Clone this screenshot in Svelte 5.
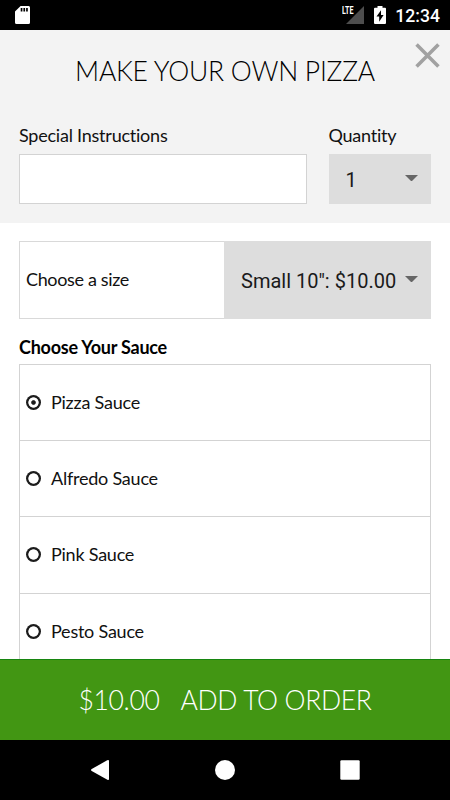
<script lang="ts">
	const sauces = ['Pizza Sauce', 'Alfredo Sauce', 'Pink Sauce', 'Pesto Sauce'];

	let instructions = $state('');
	let quantity = $state(1);
	let size = $state('small');
	let sauce = $state('Pizza Sauce');
</script>

{#snippet caret()}
	<svg class="caret" viewBox="0 0 14 7" aria-hidden="true"><path d="M0 0h14L7 7z" /></svg>
{/snippet}

<div class="screen">
	<div class="status-bar">
		<svg class="sd-card" viewBox="0 0 15 18" aria-hidden="true">
			<path fill="#fff" d="M5.6 0H13.4A1.5 1.5 0 0 1 15 1.5v15a1.5 1.5 0 0 1-1.5 1.5h-12A1.5 1.5 0 0 1 0 16.500V5.600z" />
			<path d="M5.700 2h1.700v3.600H5.700zM8.400 2h1.700v3.600H8.400zM11.100 2h1.700v3.600h-1.700z" />
		</svg>
		<div class="signal">
			<svg viewBox="0 0 18 18" aria-hidden="true"><path fill="#4d4d4d" d="M18 0v18H0z" /></svg>
			<span>LTE</span>
		</div>
		<svg class="battery" viewBox="0 0 12 18" aria-hidden="true">
			<path fill="#fff" d="M3.500 0h5v1.800H11a1 1 0 0 1 1 1V17a1 1 0 0 1-1 1H1a1 1 0 0 1-1-1V2.800a1 1 0 0 1 1-1h2.500z" />
			<path d="M7 4.200 2.500 10.600H5.200v5.100L9.600 9H7z" />
		</svg>
		<time>12:34</time>
	</div>

	<header>
		<h1>MAKE YOUR OWN PIZZA</h1>
		<button class="close" type="button" aria-label="Close">
			<svg viewBox="0 0 24 24"><path d="M1.500 1.500l21 21M22.500 1.500l-21 21" /></svg>
		</button>
		<div class="fields">
			<label class="instructions">
				<span>Special Instructions</span>
				<input type="text" bind:value={instructions} />
			</label>
			<label class="quantity">
				<span>Quantity</span>
				<div class="select">
					<select bind:value={quantity}>
						{#each [1, 2, 3, 4, 5] as n}
							<option value={n}>{n}</option>
						{/each}
					</select>
					{@render caret()}
				</div>
			</label>
		</div>
	</header>

	<main>
		<label class="size">
			<span>Choose a size</span>
			<div class="select">
				<select bind:value={size}>
					<option value="small">Small 10": $10.00</option>
				</select>
				{@render caret()}
			</div>
		</label>

		<h2>Choose Your Sauce</h2>
		<div class="options">
			{#each sauces as name}
				<label class="option">
					<input type="radio" name="sauce" value={name} bind:group={sauce} />
					<span>{name}</span>
				</label>
			{/each}
		</div>
	</main>

	<button class="add" type="button">
		<span>$10.00</span>
		<span>ADD TO ORDER</span>
	</button>

	<nav>
		<svg viewBox="0 0 20 20"><path d="M17.200 0.300Q19 -.4 19 1v18q0 1.400-1.600.7L1.700 11q-1.400-1 0-2z" /></svg>
		<svg viewBox="0 0 20 20"><circle cx="10" cy="10" r="10" /></svg>
		<svg viewBox="0 0 20 20"><rect x="0.300" y="0.300" width="19.400" height="19.400" rx="1.200" /></svg>
	</nav>
</div>

<style>
	:global(body) {
		margin: 0;
	}
	.screen {
		width: 450px;
		height: 800px;
		display: flex;
		flex-direction: column;
		overflow: hidden;
		background: #fff;
		color: #111;
		font-family: Lato, sans-serif;
		font-size: 18px;
		letter-spacing: -0.23px;
		font-variant-ligatures: none;
	}
	.screen * {
		box-sizing: border-box;
	}

	.status-bar {
		flex: none;
		height: 30px;
		padding: 0 10px 0 15px;
		display: flex;
		align-items: center;
		background: #000;
		color: #fff;
		font-family: Roboto, sans-serif;
		letter-spacing: 0;
	}
	.sd-card {
		width: 15px;
		height: 18px;
	}
	.signal {
		position: relative;
		width: 18px;
		height: 18px;
		margin-left: auto;
	}
	.signal svg {
		display: block;
	}
	.signal span {
		position: absolute;
		left: -4px;
		top: 0;
		font-size: 11px;
		line-height: 9px;
		font-weight: 700;
		transform: scaleX(0.65);
		transform-origin: left;
	}
	.battery {
		width: 12px;
		height: 18px;
		margin-left: 10px;
	}
	time {
		margin-left: 9px;
		font-size: 17.6px;
		font-weight: 500;
		line-height: 30px;
		padding-top: 1px;
	}

	header {
		position: relative;
		flex: none;
		height: 193px;
		padding: 0 19px;
		background: #f3f3f3;
	}
	h1 {
		margin: 0;
		padding-top: 24px;
		color: #000;
		font-size: 26.5px;
		line-height: 34px;
		font-weight: 300;
		letter-spacing: -0.25px;
		text-align: center;
		white-space: nowrap;
	}
	.close {
		position: absolute;
		top: 13px;
		right: 10px;
		width: 25px;
		height: 25px;
		padding: 0;
		border: 0;
		background: none;
	}
	.close svg {
		display: block;
		stroke: #a1a1a1;
		stroke-width: 3.4;
	}
	.fields {
		display: flex;
		gap: 21.5px;
		padding-top: 36px;
	}
	.fields label > span {
		display: block;
		line-height: 22px;
		margin-bottom: 8px;
	}
	.instructions {
		flex: 1;
	}
	.instructions input {
		display: block;
		width: 100%;
		height: 50px;
		padding: 0 12px;
		border: 1px solid #d3d3d3;
		border-radius: 0;
		background: #fff;
		font: inherit;
	}
	.quantity {
		width: 102.5px;
	}

	.select {
		display: flex;
		align-items: center;
		height: 50px;
		padding: 0 13.5px 0 17px;
		background: #ddd;
	}
	.select select {
		flex: 1;
		min-width: 0;
		height: 100%;
		padding: 1px 0 0;
		border: 0;
		appearance: none;
		background: none;
		color: #1a1a1a;
		font: 20px Roboto, sans-serif;
		letter-spacing: 0;
	}
	.caret {
		flex: none;
		width: 13px;
		height: 6.5px;
		margin-top: -2px;
		fill: #666;
	}

	main {
		flex: 1;
		min-height: 0;
		padding: 18px 19px 0;
		overflow: hidden;
	}
	.size {
		display: flex;
		height: 78px;
		border: 1px solid #d9d9d9;
	}
	.size > span {
		flex: 1;
		padding-left: 6px;
		line-height: 75px;
		letter-spacing: -0.35px;
	}
	.size .select {
		width: 207px;
		height: 78px;
		margin: -1px;
	}
	h2 {
		margin: 17px 0 5px;
		color: #000;
		font-size: 18px;
		line-height: 23px;
		font-weight: 700;
	}
	.options {
		border: 1px solid #d3d3d3;
	}
	.option {
		display: flex;
		align-items: center;
		height: 76.2px;
		padding-left: 6px;
		border-bottom: 1px solid #d3d3d3;
	}
	.option:last-child {
		border-bottom: 0;
	}
	.option span {
		margin-top: -1px;
	}
	.option input {
		appearance: none;
		width: 15px;
		height: 15px;
		margin: 0 10px 0 0;
		border: 0;
		border-radius: 50%;
		background: radial-gradient(circle, #fff 4.8px, #1c1c1c 5.5px);
	}
	.option input:checked {
		background: radial-gradient(circle, #1c1c1c 1.8px, #fff 2.8px, #fff 4.8px, #1c1c1c 5.5px);
	}

	.add {
		flex: none;
		display: flex;
		justify-content: center;
		align-items: center;
		gap: 21px;
		height: 81px;
		padding: 0 0 1px;
		border: 0;
		border-top: 1px solid #178510;
		background: #429613;
		color: #fff;
		font: 300 26.5px Lato, sans-serif;
		letter-spacing: -0.35px;
	}
	nav {
		flex: none;
		height: 60px;
		padding: 0 90px;
		display: flex;
		justify-content: space-between;
		align-items: center;
		background: #000;
	}
	nav svg {
		width: 20px;
		height: 20px;
		fill: #fff;
	}
</style>
